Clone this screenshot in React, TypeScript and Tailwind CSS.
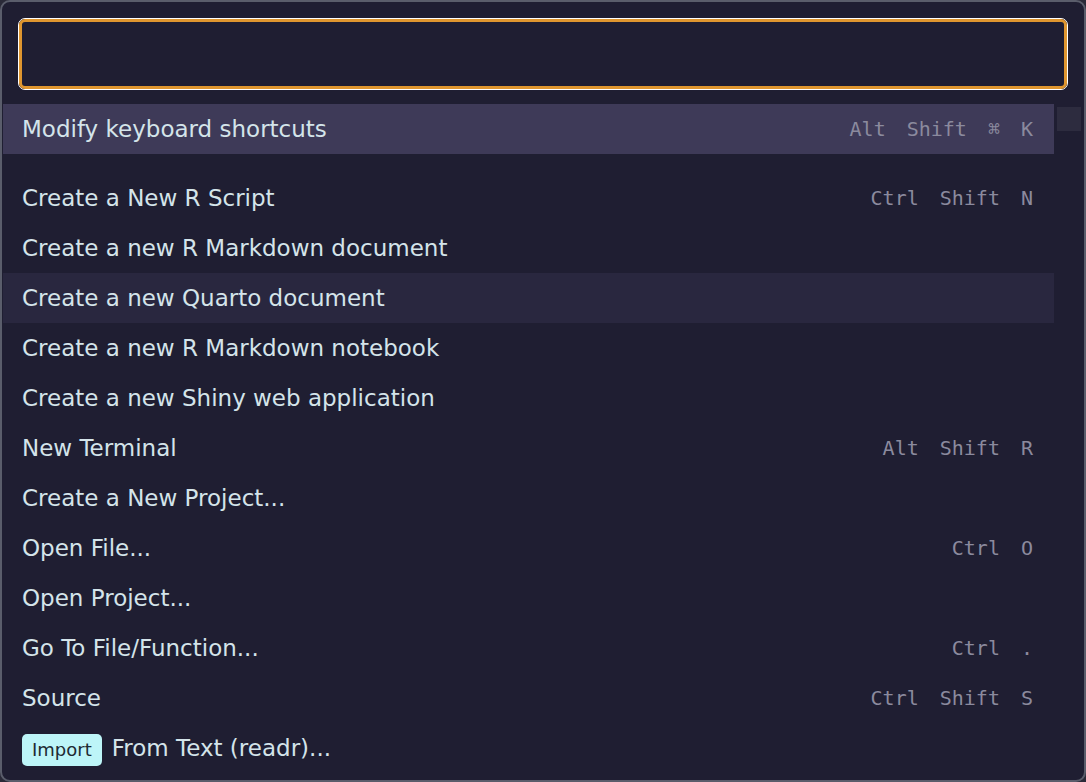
import React from 'react'

type Command = {
  label: string
  keys?: string[]
  badge?: string
  hover?: boolean
}

const commands: Command[] = [
  { label: 'Create a New R Script', keys: ['Ctrl', 'Shift', 'N'] },
  { label: 'Create a new R Markdown document' },
  { label: 'Create a new Quarto document', hover: true },
  { label: 'Create a new R Markdown notebook' },
  { label: 'Create a new Shiny web application' },
  { label: 'New Terminal', keys: ['Alt', 'Shift', 'R'] },
  { label: 'Create a New Project...' },
  { label: 'Open File...', keys: ['Ctrl', 'O'] },
  { label: 'Open Project...' },
  { label: 'Go To File/Function...', keys: ['Ctrl', '.'] },
  { label: 'Source', keys: ['Ctrl', 'Shift', 'S'] },
  { label: 'From Text (readr)...', badge: 'Import' },
]

function Keys({ keys }: { keys?: string[] }) {
  if (!keys) return null
  return (
    <div className="flex items-center gap-[21px] font-['DejaVu_Sans_Mono',monospace] text-[20px] text-[#8b8a9e]">
      {keys.map((k, i) => (
        <span key={i}>{k}</span>
      ))}
    </div>
  )
}

function Row({ cmd, selected }: { cmd: Command; selected?: boolean }) {
  const bg = selected ? 'bg-[#3e3a58]' : cmd.hover ? 'bg-[#29273f]' : ''
  return (
    <div className={`flex h-[50px] items-center justify-between pl-[19px] pr-[21px] ${bg}`}>
      <div className="flex items-center gap-[10px]">
        {cmd.badge && (
          <span className="mt-[3px] flex h-[32px] items-center rounded-[5px] bg-[#bdf5f8] px-[10px] text-[18px] text-[#1e2a33]">
            {cmd.badge}
          </span>
        )}
        <span>{cmd.label}</span>
      </div>
      <Keys keys={cmd.keys} />
    </div>
  )
}

export default function App() {
  return (
    <div className="h-[782px] w-[1086px] bg-[#2a2a38] font-['DejaVu_Sans',sans-serif] text-[23px] text-[#d4e4ea]">
      <div className="h-full w-full rounded-[10px] border-2 border-[#5a5d6b] bg-[#1f1e32]">
        <div className="px-[16px] pt-[16px]">
          <div className="h-[72px] rounded-[7px] border border-white">
            <div className="h-full rounded-[6px] border-[3px] border-[#df962f] bg-[#1f1e32]"></div>
          </div>
        </div>
        <div className="mt-[14px] flex">
          <div className="flex-1 pl-px">
            <Row cmd={{ label: 'Modify keyboard shortcuts', keys: ['Alt', 'Shift', '⌘', 'K'] }} selected />
            <div className="h-[19px]"></div>
            {commands.map((c, i) => (
              <Row key={i} cmd={c} />
            ))}
          </div>
          <div className="w-[30px] pl-[3px] pt-[3px]">
            <div className="h-[24px] w-[24px] bg-[#2d2c3f]"></div>
          </div>
        </div>
      </div>
    </div>
  )
}
